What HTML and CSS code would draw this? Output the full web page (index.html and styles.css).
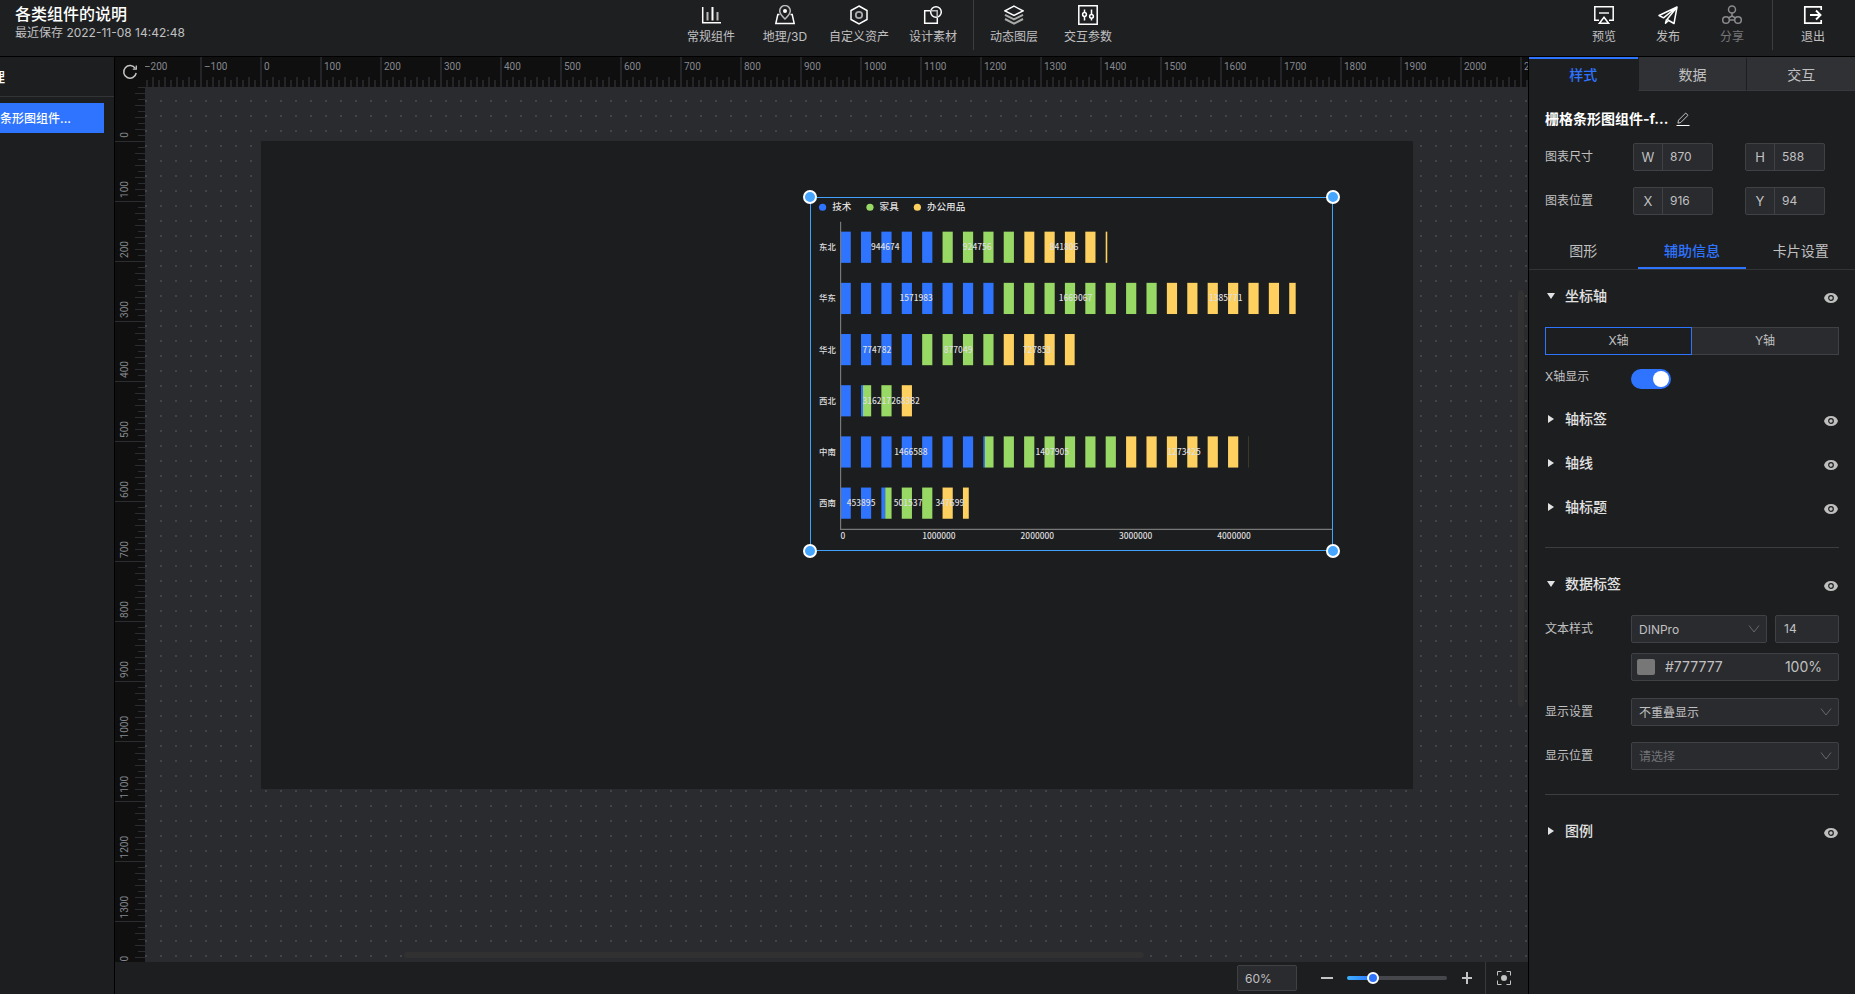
FILE: index.html
```
<!DOCTYPE html>
<html lang="zh-CN">
<head>
  <meta charset="UTF-8">
  <meta name="viewport" content="width=device-width, initial-scale=1.0">
  <title>各类组件的说明</title>
  <link rel="stylesheet" href="styles.css">
</head>
<body>
  <!-- 公用图标 -->
  <svg class="symbols" aria-hidden="true">
    <symbol id="icon-eye" viewBox="0 0 14 10">
      <path fill="currentColor" d="M7 0C3.500 0 1 1.700 0 5c1 3.300 3.500 5 7 5s6-1.700 7-5C13 1.700 10.500 0 7 0z"/>
      <circle cx="7" cy="5" r="2.300" fill="none" stroke="#1d1e20" stroke-width="1.200"/>
    </symbol>
    <symbol id="icon-chevron" viewBox="0 0 12 8">
      <path fill="none" stroke="currentColor" d="M1 0.500l5 6.500l5-6.500"/>
    </symbol>
  </svg>

  <header class="topbar">
    <div class="project">
      <h1>各类组件的说明</h1>
      <p>最近保存 2022-11-08 14:42:48</p>
    </div>
    <nav class="tools">
      <button class="tool">
        <svg width="20" height="20" viewBox="0 0 20 20" fill="none" stroke="#fff" stroke-width="1.500"><path d="M1.700 2v15.700H20"/><path stroke="#bbb" stroke-width="2" d="M6.500 7v8.500M16.500 7v8.500"/><path stroke-width="2" d="M11.500 2v13.500"/></svg>
        常规组件
      </button>
      <button class="tool">
        <svg width="20" height="20" viewBox="0 0 20 20" fill="none" stroke="#fff" stroke-width="1.500"><path d="M4.500 9.500H2.800L.8 18.500h18.400L17.200 9.500h-1.700"/><path stroke="#bbb" d="M10 14C6.500 10.500 4.700 8.500 4.700 5.900a5.300 5.300 0 0 1 10.600 0C15.300 8.500 13.500 10.500 10 14z"/><circle cx="10" cy="6" r="2" fill="#fff" stroke="none"/></svg>
        地理/3D
      </button>
      <button class="tool">
        <svg width="20" height="20" viewBox="0 0 20 20" fill="none" stroke="#fff" stroke-width="1.500"><path d="M10 1l8 4.500v9L10 19l-8-4.500v-9z"/><circle cx="10" cy="10" r="3.200" stroke="#aaa" stroke-width="1.800"/></svg>
        自定义资产
      </button>
      <button class="tool">
        <svg width="20" height="20" viewBox="0 0 20 20" fill="none" stroke="#fff" stroke-width="1.500"><path d="M7 5.700H1.700v12.500h12.600V13"/><circle cx="13" cy="7" r="5.300"/><path stroke="#bbb" d="M9 5.700h5.200V11"/></svg>
        设计素材
      </button>
      <span class="divider"></span>
      <button class="tool">
        <svg width="20" height="20" viewBox="0 0 20 20" fill="none" stroke="#fff" stroke-width="1.500"><path d="M10 1.200l9 4.600l-9 4.600l-9-4.600z"/><path stroke="#aaa" stroke-width="2" d="M1 9.800l9 4.600l9-4.600M1 14l9 4.600l9-4.600"/></svg>
        动态图层
      </button>
      <button class="tool">
        <svg width="20" height="20" viewBox="0 0 20 20" fill="none" stroke="#fff" stroke-width="1.500"><path d="M.8 .8h18.400v18.400H.8z"/><path d="M6.500 4.500v3M6.500 11.500v4M13.500 4.500v4.500M13.500 13v2.500"/><circle cx="6.500" cy="9.500" r="1.900"/><circle cx="13.500" cy="11.300" r="1.900"/></svg>
        交互参数
      </button>
    </nav>
    <div class="actions">
      <button class="tool">
        <svg width="20" height="20" viewBox="0 0 20 20" fill="none" stroke="#fff" stroke-width="1.500"><path d="M5 15.200H.8V1.800h18.400v13.400H15"/><path d="M10 12.200l4.600 6H5.400z"/><path stroke-width="2" stroke="#bbb" d="M5 8h10"/></svg>
        预览
      </button>
      <button class="tool">
        <svg width="20" height="20" viewBox="0 0 20 20" fill="none" stroke="#fff" stroke-width="1.500" stroke-linejoin="round"><path d="M19 2L1 10.500l4.500 2.300L19 2l-3 16.500l-7-4L19 2M8.500 14.500l-1 3.800l3-2.800"/></svg>
        发布
      </button>
      <button class="tool disabled">
        <svg width="20" height="20" viewBox="0 0 20 20" fill="none" stroke="#8b8b8d" stroke-width="1.500"><circle cx="10" cy="4.500" r="3.500"/><circle cx="4" cy="15" r="3.300"/><circle cx="16" cy="15" r="3.300"/><path d="M10 8v3L6.500 13M10 11l3.500 2M7.300 15h5.400"/></svg>
        分享
      </button>
      <span class="divider"></span>
      <button class="tool">
        <svg width="20" height="20" viewBox="0 0 20 20" fill="none" stroke="#fff" stroke-width="1.700"><path d="M18.200 5V1.800H1.800v16.400h16.400V15"/><path stroke-width="1.900" d="M7 10h10.500M13 5.500l4.500 4.500l-4.500 4.500"/></svg>
        退出
      </button>
    </div>
  </header>

  <div class="main">
    <aside class="layers">
      <h2>图层管理</h2>
      <a class="layer" href="#"><span>栅格条形图组件...</span></a>
    </aside>

    <main class="editor">
      <div class="stage">
        <button class="reset" aria-label="重置画布">
          <svg width="16" height="16" viewBox="0 0 16 16" fill="none" stroke="#c4c4c4" stroke-width="1.500"><path d="M13.300 4.400A6.300 6.300 0 1 0 14.200 9"/><path d="M10.800 5.200h3.500V1.500" stroke-width="1.300"/></svg>
        </button>
        <div class="ruler-x" id="ruler-x"></div>
        <div class="ruler-y" id="ruler-y"></div>
        <div class="workspace">
          <div class="canvas">
            <div class="widget">
              <svg class="chart" id="chart" viewBox="-1 0 872 588" role="img" aria-label="栅格条形图"></svg>
              <i class="handle tl"></i>
              <i class="handle tr"></i>
              <i class="handle bl"></i>
              <i class="handle br"></i>
            </div>
          </div>
          <div class="scroll-x"></div>
          <div class="scroll-y"></div>
        </div>
      </div>

      <footer class="zoombar">
        <input class="zoom-value" type="text" value="60%" aria-label="缩放比例">
        <button class="zoom-btn" aria-label="缩小"><svg width="12" height="12" viewBox="0 0 12 12"><path stroke="#c4c4c4" stroke-width="2" d="M0 6h12"/></svg></button>
        <input class="zoom-range" type="range" min="0" max="100" value="23" aria-label="缩放">
        <button class="zoom-btn" aria-label="放大"><svg width="12" height="12" viewBox="0 0 12 12"><path stroke="#c4c4c4" stroke-width="2" d="M1 6h10M6 0v12"/></svg></button>
        <button class="fit" aria-label="适应屏幕">
          <svg width="14" height="14" viewBox="0 0 14 14" fill="none" stroke="#c4c4c4"><path d="M.5 4.500v-4h4M9.500 .5h4v4M13.500 9.500v4h-4M4.500 13.500h-4v-4"/><circle cx="7" cy="7" r="3" fill="#c4c4c4" stroke="none"/></svg>
        </button>
      </footer>
    </main>

    <aside class="panel">
      <div class="tabs">
        <button class="tab active">样式</button>
        <button class="tab">数据</button>
        <button class="tab">交互</button>
      </div>

      <div class="basic">
        <div class="name">
          <h2>栅格条形图组件-f...</h2>
          <button aria-label="重命名"><svg width="14" height="14" viewBox="0 0 14 14" fill="none" stroke="#c4c4c4"><path d="M2.500 8.200L9.700 1l2.300 2.300l-7.200 7.200l-2.900.7z"/><path stroke="#fff" d="M.5 13.500h13"/></svg></button>
        </div>
        <div class="pair">
          <span class="caption">图表尺寸</span>
          <label class="unit"><b>W</b><input type="text" value="870"></label>
          <label class="unit"><b>H</b><input type="text" value="588"></label>
        </div>
        <div class="pair">
          <span class="caption">图表位置</span>
          <label class="unit"><b>X</b><input type="text" value="916"></label>
          <label class="unit"><b>Y</b><input type="text" value="94"></label>
        </div>
      </div>

      <div class="subtabs">
        <button class="subtab">图形</button>
        <button class="subtab active">辅助信息</button>
        <button class="subtab">卡片设置</button>
      </div>

      <div class="settings">
        <section>
          <div class="head open"><h3>坐标轴</h3><button aria-label="显示坐标轴"><svg width="14" height="10"><use href="#icon-eye"/></svg></button></div>
          <div class="segment">
            <button class="on">X轴</button>
            <button>Y轴</button>
          </div>
          <div class="switch-row">
            <label for="show-x">X轴显示</label>
            <input class="switch" type="checkbox" id="show-x" checked>
          </div>
          <div class="head"><h3>轴标签</h3><button aria-label="显示轴标签"><svg width="14" height="10"><use href="#icon-eye"/></svg></button></div>
          <div class="head"><h3>轴线</h3><button aria-label="显示轴线"><svg width="14" height="10"><use href="#icon-eye"/></svg></button></div>
          <div class="head"><h3>轴标题</h3><button aria-label="显示轴标题"><svg width="14" height="10"><use href="#icon-eye"/></svg></button></div>
        </section>

        <section>
          <div class="head open"><h3>数据标签</h3><button aria-label="显示数据标签"><svg width="14" height="10"><use href="#icon-eye"/></svg></button></div>
          <div class="fields">
            <div class="field">
              <label for="font">文本样式</label>
              <div class="controls">
                <div class="line">
                  <span class="select"><select id="font"><option>DINPro</option></select><svg width="12" height="8"><use href="#icon-chevron"/></svg></span>
                  <input class="box size" type="text" value="14" aria-label="字号">
                </div>
                <div class="box color">
                  <button class="swatch" aria-label="选择颜色"></button>
                  <input type="text" value="#777777" aria-label="颜色">
                  <input class="alpha" type="text" value="100%" aria-label="透明度">
                </div>
              </div>
            </div>
            <div class="field">
              <label for="display">显示设置</label>
              <span class="select"><select id="display"><option>不重叠显示</option></select><svg width="12" height="8"><use href="#icon-chevron"/></svg></span>
            </div>
            <div class="field">
              <label for="place">显示位置</label>
              <span class="select empty"><select id="place"><option>请选择</option></select><svg width="12" height="8"><use href="#icon-chevron"/></svg></span>
            </div>
          </div>
        </section>

        <section>
          <div class="head"><h3>图例</h3><button aria-label="显示图例"><svg width="14" height="10"><use href="#icon-eye"/></svg></button></div>
        </section>
      </div>
    </aside>
  </div>

  <script>
    // 标尺刻度
    function renderRuler(id, from, to) {
      const ruler = document.getElementById(id);
      for (let n = from; n <= to; n += 100) {
        const cell = document.createElement('span');
        cell.className = 'mark';
        cell.innerHTML = `<em>${n < 0 ? '–' + Math.abs(n) : n}</em>`;
        ruler.appendChild(cell);
      }
    }
    renderRuler('ruler-x', -200, 2100);
    renderRuler('ruler-y', 0, 1400);

    // 图表数据
    const series = [
      { name: '技术', color: '#2e74ff', x: 20 },
      { name: '家具', color: '#98d865', x: 99 },
      { name: '办公用品', color: '#fdd060', x: 178 }
    ];
    const rows = [
      { name: '东北', values: [944674, 924756, 841806] },
      { name: '华东', values: [1571983, 1669067, 1385771] },
      { name: '华北', values: [774782, 877049, 727853] },
      { name: '西北', values: [228000, 316217, 268382], hide: 0 },
      { name: '中南', values: [1466588, 1407905, 1273425] },
      { name: '西南', values: [453895, 501537, 347699] }
    ];

    // 绘图区：左 50，上 40，高 512，每百万 164
    function renderChart() {
      const left = 50, top = 40, band = 512 / 6, step = 34, barHeight = 52;
      const scale = v => v * 164 / 1000000;
      let bars = '', labels = '';

      series.forEach(s => {
        labels += `<circle cx="${s.x}" cy="16" r="6" fill="${s.color}"/>
          <text class="legend" x="${s.x + 16}" y="21">${s.name}</text>`;
      });

      rows.forEach((row, i) => {
        const mid = top + band * (i + 0.5);
        let sum = 0;
        labels += `<text class="category" x="42" y="${mid + 5}">${row.name}</text>`;
        row.values.forEach((value, k) => {
          const start = scale(sum), end = scale(sum + value);
          // 每个栅格宽 17，超出数值的部分裁掉
          for (let x = 0; x < end; x += step) {
            const a = Math.max(x, start), b = Math.min(x + step / 2, end);
            if (b > a) {
              bars += `<rect x="${left + a}" y="${mid - barHeight / 2}" width="${b - a}" height="${barHeight}" fill="${series[k].color}"/>`;
            }
          }
          if (row.hide !== k) {
            labels += `<text class="value" x="${left - 3 + (start + end) / 2}" y="${mid + 5}">${value}</text>`;
          }
          sum += value;
        });
      });

      for (let n = 0; n <= 4; n++) {
        labels += `<text class="value${n ? '' : ' first'}" x="${left + n * 164}" y="569">${n * 1000000}</text>`;
      }

      document.getElementById('chart').innerHTML =
        bars + `<path class="axis" d="M50 ${top}V553H870"/>` + labels;
    }
    renderChart();
  </script>
</body>
</html>
```
FILE: styles.css
```
*, *::before {
  box-sizing: border-box;
}

body {
  margin: 0;
  height: 100vh;
  display: flex;
  flex-direction: column;
  overflow: hidden;
  background-color: #1d1e20;
  color: #c0c0c1;
  font-family: Inter, "Noto Sans CJK SC", sans-serif;
  font-size: 12px;
  line-height: 18px;
}

h1, h2, h3, p {
  margin: 0;
}

button, input, select {
  margin: 0;
  padding: 0;
  border: none;
  background: none;
  color: inherit;
  font: inherit;
  outline: none;
}

button {
  cursor: pointer;
}

svg {
  display: block;
}

.symbols {
  display: none;
}

/* 顶部栏 */
.topbar {
  display: flex;
  justify-content: space-between;
  height: 57px;
  flex: none;
  padding: 0 10px 0 15px;
  background-color: #1e1f21;
  border-bottom: 1px solid #000;
}

.project {
  min-width: 212px;
  padding-top: 4px;
}

.project h1 {
  color: #fff;
  font-size: 16px;
  font-weight: 500;
  line-height: 20px;
}

.tools, .actions {
  display: flex;
}

.tool {
  display: flex;
  flex-direction: column;
  align-items: center;
  gap: 3px;
  width: 74px;
  padding-top: 5px;
  white-space: nowrap;
}

.actions .tool {
  width: 64px;
}

.tool.disabled {
  color: #77777a;
}

.divider {
  width: 1px;
  height: 50px;
  margin: 0 3px;
  background-color: #3d3e41;
}

.actions .divider {
  margin: 0 8px;
}

.main {
  display: flex;
  flex: 1;
  min-height: 0;
}

/* 图层 */
.layers {
  width: 115px;
  flex: none;
  overflow: hidden;
  border-right: 1px solid #000;
}

.layers h2 {
  display: flex;
  justify-content: flex-end;
  height: 40px;
  padding-right: 109px;
  border-bottom: 1px solid #333437;
  color: #fff;
  font-size: 14px;
  font-weight: 500;
  line-height: 40px;
  white-space: nowrap;
}

.layer {
  display: flex;
  justify-content: flex-end;
  height: 30px;
  margin: 6px 10px 0 0;
  padding-right: 33px;
  background-color: #2e74ff;
  color: #fff;
  font-weight: 500;
  line-height: 32px;
  text-decoration: none;
  white-space: nowrap;
}

/* 画布区 */
.editor {
  display: flex;
  flex-direction: column;
  flex: 1;
  min-width: 0;
}

.stage {
  display: grid;
  grid-template-columns: 30px minmax(0, 1fr);
  grid-template-rows: 30px minmax(0, 1fr);
  flex: 1;
  min-height: 0;
  background-color: #0f0f0f;
}

.reset {
  display: flex;
  align-items: center;
  justify-content: center;
}

.ruler-x, .ruler-y {
  display: flex;
  overflow: hidden;
  color: #85888e;
  font-family: Roboto, sans-serif;
  font-size: 10px;
  line-height: 12px;
}

.ruler-x em, .ruler-y em {
  font-style: normal;
}

.ruler-x .mark {
  flex: none;
  width: 60px;
  padding: 4px 0 0 2px;
  border-left: 2px solid #242528;
  background-image:
    repeating-linear-gradient(90deg, transparent 0 4px, #242528 4px 6px),
    repeating-linear-gradient(90deg, transparent 0 10px, #242528 10px 12px);
  background-position: left bottom;
  background-size: 58px 7px, 58px 10px;
  background-repeat: no-repeat;
}

.ruler-x .mark:first-child {
  margin-left: -5px;
}

.ruler-y {
  flex-direction: column;
}

.ruler-y .mark {
  display: flex;
  align-items: flex-end;
  flex: none;
  height: 60px;
  padding: 0 0 3px 4px;
  border-bottom: 1px solid #2c2d30;
  background-image:
    repeating-linear-gradient(transparent 0 5px, #2c2d30 5px 6px),
    repeating-linear-gradient(transparent 0 11px, #2c2d30 11px 12px);
  background-position: right top;
  background-size: 7px 60px, 10px 60px;
  background-repeat: no-repeat;
}

.ruler-y .mark:first-child {
  margin-top: -5px;
}

.ruler-y em {
  writing-mode: vertical-rl;
  transform: rotate(180deg);
}

.workspace {
  position: relative;
  overflow: hidden;
  background-color: #2a2b2f;
  background-image: conic-gradient(from 270deg at 2px 2px, #434448 25%, transparent 0);
  background-position: 0 13px;
  background-size: 15px 15px;
}

.canvas {
  position: absolute;
  left: 116px;
  top: 54px;
  width: 1152px;
  height: 648px;
  background-color: #1c1d1e;
}

.widget {
  position: absolute;
  left: 549px;
  top: 56px;
  width: 523px;
  height: 354px;
  outline: 1px solid #40a2fc;
  outline-offset: -1px;
}

.chart {
  width: 100%;
  height: 100%;
  font-family: "Noto Sans CJK SC", sans-serif;
  font-size: 14px;
  font-weight: 500;
  fill: #dedede;
}

.chart .axis {
  fill: none;
  stroke: #77787a;
  stroke-width: 2;
}

.chart .legend {
  font-size: 16px;
}

.chart .category {
  text-anchor: end;
}

.chart .value {
  text-anchor: middle;
}

.chart .first {
  text-anchor: start;
}

.handle {
  position: absolute;
  width: 14px;
  height: 14px;
  border: 2px solid #fff;
  border-radius: 50%;
  background-color: #46a6ff;
}

.tl, .tr {
  top: -7px;
}

.bl, .br {
  bottom: -7px;
}

.tl, .bl {
  left: -7px;
}

.tr, .br {
  right: -7px;
}

.scroll-x, .scroll-y {
  position: absolute;
  border-radius: 3px;
  background-color: #313132;
}

.scroll-x {
  left: 259px;
  right: 384px;
  bottom: 4px;
  height: 6px;
}

.scroll-y {
  top: 203px;
  bottom: 255px;
  right: 4px;
  width: 6px;
}

/* 缩放栏 */
.zoombar {
  display: flex;
  align-items: center;
  justify-content: flex-end;
  height: 32px;
  flex: none;
}

.zoom-value {
  width: 60px;
  height: 26px;
  margin-right: 20px;
  padding-left: 7px;
  border: 1px solid #404145;
  border-radius: 2px;
  background-color: #2a2b2f;
}

.zoom-btn {
  display: flex;
  align-items: center;
  justify-content: center;
  width: 20px;
  height: 20px;
}

.zoom-range {
  appearance: none;
  width: 100px;
  height: 4px;
  margin: 0 10px;
  border-radius: 2px;
  background-image: linear-gradient(90deg, #3fb0ff 0, #2e74ff 26%, #46474c 26%);
}

.zoom-range::-webkit-slider-thumb {
  appearance: none;
  width: 12px;
  height: 12px;
  border: 2px solid #fff;
  border-radius: 50%;
  background-color: #2e74ff;
}

.fit {
  display: flex;
  align-items: center;
  justify-content: center;
  width: 43px;
  height: 32px;
  margin-left: 8px;
  padding-right: 6px;
  border-left: 1px solid #38393c;
}

/* 右侧面板 */
.panel {
  width: 327px;
  flex: none;
  border-left: 1px solid #000;
}

.tabs, .subtabs {
  display: grid;
  grid-template-columns: repeat(3, 1fr);
  font-size: 14px;
}

.tab {
  height: 34px;
  border-left: 1px solid #1d1e20;
  border-top: 2px solid #303135;
  border-bottom: 1px solid #38393c;
  background-color: #303135;
}

.tab.active {
  border-color: #2e74ff #1d1e20 #1d1e20;
  border-left: none;
  background-color: #1d1e20;
  color: #2e74ff;
  font-weight: 500;
}

.basic {
  display: flex;
  flex-direction: column;
  gap: 16px;
  padding: 18px 30px 0 16px;
}

.name {
  display: flex;
  align-items: center;
  gap: 8px;
  height: 20px;
}

.name h2 {
  color: #fff;
  font-size: 14px;
  font-weight: 700;
}

.pair {
  display: grid;
  grid-template-columns: 1fr 80px 80px;
  column-gap: 32px;
  align-items: center;
  margin-top: -2px;
}

.pair + .pair {
  margin-top: 0;
}

.unit {
  display: flex;
  height: 28px;
  border: 1px solid #404145;
  border-radius: 2px;
  background-color: #2a2b2f;
  line-height: 26px;
}

.unit b {
  width: 29px;
  flex: none;
  border-right: 1px solid #404145;
  font-size: 13px;
  font-weight: 400;
  text-align: center;
}

.unit input {
  width: 100%;
  min-width: 0;
  padding-left: 7px;
}

.subtabs {
  margin-top: 16px;
  border-bottom: 1px solid #333437;
}

.subtab {
  height: 38px;
  padding-top: 4px;
  border-bottom: 2px solid transparent;
}

.subtab.active {
  border-color: #2e74ff;
  color: #2e74ff;
  font-weight: 500;
}

.settings {
  padding: 4px 16px 0;
}

.settings section + section {
  margin-top: 18px;
  padding-top: 14px;
  border-top: 1px solid #3d3e41;
}

.settings section + section + section {
  margin-top: 24px;
}

.head {
  display: flex;
  align-items: center;
  height: 44px;
  color: #e2e2e2;
}

.head h3 {
  flex: 1;
  font-size: 14px;
  font-weight: 500;
}

.head::before {
  content: "";
  width: 6px;
  margin: 0 11px 0 3px;
  border-left: 6px solid #e2e2e2;
  border-top: 4px solid transparent;
  border-bottom: 4px solid transparent;
}

.head.open::before {
  width: 8px;
  margin: 0 10px 0 2px;
  border-left: 4px solid transparent;
  border-right: 4px solid transparent;
  border-top: 6px solid #e2e2e2;
  border-bottom: none;
}

.head button {
  padding: 3px 1px 0 0;
  color: #bfbfbf;
}

.segment {
  display: grid;
  grid-template-columns: 1fr 1fr;
  margin-top: 9px;
}

.segment button {
  height: 28px;
  border: 1px solid #404145;
  border-left: none;
  background-color: #2a2b2f;
}

.segment .on {
  border: 1px solid #2e74ff;
  background-color: #1d1e20;
}

.switch-row {
  display: flex;
  align-items: center;
  height: 42px;
  padding-top: 6px;
}

.switch-row label {
  padding-bottom: 4px;
}

.switch-row label, .field > label {
  width: 86px;
  flex: none;
}

.switch {
  appearance: none;
  width: 40px;
  height: 20px;
  padding: 2px;
  border-radius: 10px;
  background-color: #2e74ff;
}

.switch::before {
  content: "";
  display: block;
  width: 16px;
  height: 16px;
  border-radius: 50%;
  background-color: #fff;
}

.switch:checked::before {
  margin-left: 20px;
}

.fields {
  display: flex;
  flex-direction: column;
  gap: 16px;
  padding-top: 9px;
}

.field {
  display: flex;
  line-height: 28px;
}

.controls {
  display: flex;
  flex-direction: column;
  gap: 10px;
  flex: 1;
  margin-bottom: 1px;
}

.line {
  display: flex;
  gap: 8px;
}

.box, .select {
  height: 28px;
  border: 1px solid #404145;
  border-radius: 2px;
  background-color: #2a2b2f;
}

.select {
  display: grid;
  grid-template-columns: 1fr 18px;
  align-items: center;
  flex: 1;
  color: #c0c0c1;
}

.select select {
  appearance: none;
  grid-column: 1 / 3;
  grid-row: 1;
  height: 26px;
  padding-left: 7px;
}

.select svg {
  grid-column: 2;
  grid-row: 1;
  color: #66676a;
  pointer-events: none;
}

.select.empty select {
  color: #737477;
}

.size {
  width: 64px;
  padding-left: 8px;
}

.color {
  display: flex;
  align-items: center;
  padding: 0 16px 0 5px;
  font-size: 14px;
}

.swatch {
  width: 18px;
  height: 16px;
  margin-right: 10px;
  border-radius: 2px;
  background-color: #777;
}

.color input {
  width: 60px;
  flex: 1;
}

.color .alpha {
  flex: none;
  text-align: right;
}
```
